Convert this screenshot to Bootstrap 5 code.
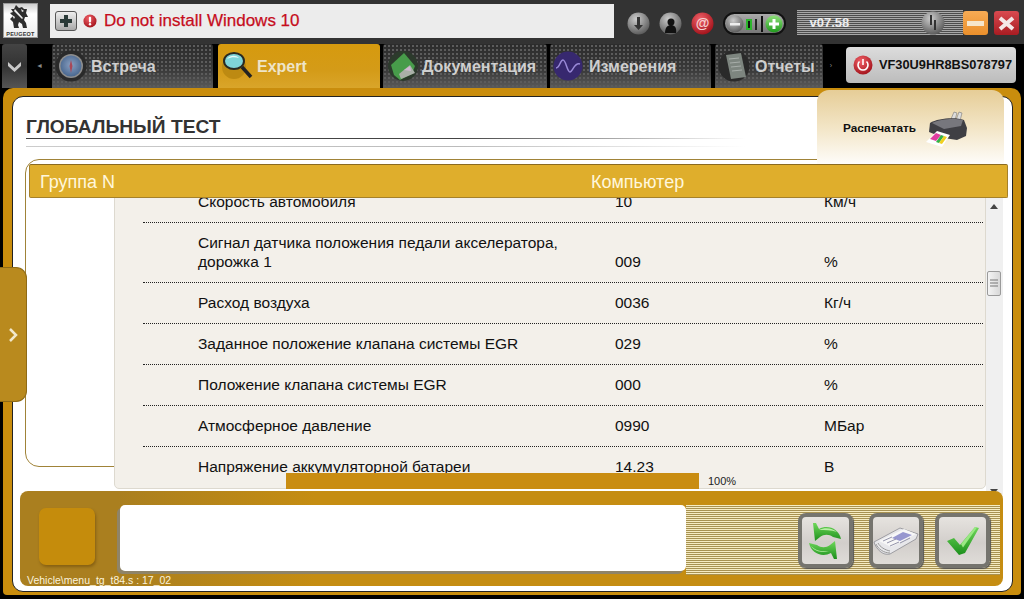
<!DOCTYPE html>
<html lang="ru">
<head>
    <meta charset="UTF-8">
    <meta name="viewport" content="width=device-width, initial-scale=1.0">
    <title>Глобальный тест</title>
    <link href="https://cdn.jsdelivr.net/npm/bootstrap@5.3.1/dist/css/bootstrap.min.css" rel="stylesheet">
    <style>
        html, body { height: 599px; overflow: hidden; }
        body { background: #000; font-family: "Liberation Sans", Arial, sans-serif; color: #111; }
        .app { width: 1024px; height: 599px; }

        /* top bar */
        .topbar { height: 44px; background: #333; padding: 4px 5px 0 3px; }
        .logo-box { width: 35px; height: 35px; margin-top: -1px; background: linear-gradient(#cfcfcf, #fff 30%, #eee); border: 1px solid #999; }
        .logo-name { font-size: 5.5px; line-height: 6px; font-weight: 700; letter-spacing: .2px; color: #333; }
        .msg-bar { width: 565px; height: 34px; margin-left: 12px; background: #ececec; padding-left: 5px; }
        .msg-plus { width: 22px; height: 20px; background: linear-gradient(#eee, #a9a9a9); border: 1px solid #555; border-radius: 3px; }
        .msg-text { color: #c60d1c; font-size: 17px; margin-left: 7px; -webkit-text-stroke: .25px #c60d1c; }
        .tools { margin: 8px 0 0 13px; gap: 9px; }
        .pill { width: 64px; height: 23px; margin: 8px 0 0 9px; border-radius: 12px; border: 2px solid #111; background: linear-gradient(#aaa, #777); padding: 0 1px; }
        .version { width: 166px; height: 25px; margin: 6px 0 0 11px; padding: 0 12px; color: #eee; font-size: 13px; font-weight: 700;
            background: repeating-linear-gradient(#a8a8a8 0 1px, #4c4c4c 1px 2px); }
        .win-btn { width: 25px; height: 24px; margin-top: 7px; border-radius: 3px; }
        .win-min { background: linear-gradient(#f6ab55, #ea8f2b); }
        .win-close { background: linear-gradient(#d94a50, #a81c22); margin-left: 6px; }

        /* tabs */
        .tabrow { height: 44px; background: #000; padding-left: 2px; }
        .drop-btn { width: 25px; background: linear-gradient(#444, #333 50%, #555); border-radius: 3px 3px 0 0; }
        .small-arrow { color: #888; font-size: 7px; width: 25px; text-align: center; }
        .tab-item { height: 44px; border-radius: 3px 3px 0 0; font-size: 16px; font-weight: 700; color: #cfcfcf; padding-left: 3px;
            background-image: radial-gradient(#5c5c5c 1px, transparent 1.2px), linear-gradient(#2c2c2c, #3a3a3a 60%, #5a5a5a);
            background-size: 4px 4px, 100% 100%; }
        .tab-item span { padding-top: 2px; }
        .tab-on { color: #eee4c8; background: linear-gradient(#d69a0e, #d49b18 60%, #d9a52a); }
        .vin-btn { width: 170px; height: 36px; margin: 3px 0 0 7px; border-radius: 4px; background: linear-gradient(#dcdcdc, #bcbcbc); color: #111; font-size: 12.8px; font-weight: 700; padding-left: 7px; gap: 6px; }

        /* main panel */
        .gold-frame { height: 507px; margin: 0 3px 0 3px; padding: 8px 8px 3px 9px; background: #c98d0d; border-radius: 10px 10px 4px 4px; }
        .inner-panel { height: 496px; background: #fff; border: 1px solid #222; border-radius: 11px; }
        .title-text { margin: 19px 0 0 13px; font-size: 19.2px; line-height: 22px; font-weight: 700; color: #333; }
        .title-line { height: 1px; margin-left: 13px; width: 720px; background: linear-gradient(90deg, #444, #444 60%, #fff); }
        .title-line2 { height: 1px; margin-left: 13px; margin-top: 7px; width: 720px; background: linear-gradient(90deg, #ccc, #bbb 60%, #fff); }
        .group-box { height: 308px; width: 975px; margin: 12px 0 0 12px; border: 1px solid #a08338; border-radius: 14px; }
        .group-band { left: 16px; top: 67px; width: 979px; height: 34px; padding-top: 2px; background: #dfae2c; border: 1px solid #a5812a; border-top-color: #8a6a20; border-radius: 2px; color: #fff7dc; font-size: 18px; z-index: 3; }
        .band-a { margin-left: 10px; width: 551px; }
        .data-list { left: 101px; top: 100px; width: 872px; height: 292px; background: #f3f0ea; border: 1px solid #ddd9cf; border-radius: 0 0 5px 5px; overflow: hidden; z-index: 2; font-size: 15.5px; }
        .data-rows { margin: -16px 2px 0 28px; }
        .data-row { padding: 10px 0 11px; line-height: 19px; border-bottom: 1px dotted #222; align-items: flex-end; }
        .data-row:last-child { border-bottom: 0; }
        .cell-a { width: 472px; padding-left: 55px; padding-right: 40px; flex: none; }
        .cell-b { width: 209px; flex: none; }
        .scroll-col { left: 973px; top: 100px; width: 17px; height: 298px; background: #f0f0f0; z-index: 2; }
        .scroll-thumb { left: 1px; top: 74px; width: 14px; height: 25px; background: linear-gradient(90deg, #f4f4f4, #d8d8d8); border: 1px solid #9a9a9a; border-radius: 2px; }
        .scroll-up, .scroll-down { left: 4px; width: 0; height: 0; border-left: 4px solid transparent; border-right: 4px solid transparent; }
        .scroll-up { top: 7px; border-bottom: 5px solid #444; }
        .scroll-down { bottom: 1px; border-top: 5px solid #444; }
        .print-tab { left: 804px; top: -7px; width: 187px; height: 78px; border-radius: 12px 12px 0 0; background: linear-gradient(#e6cd97, #f3e6c8 50%, #fff); font-size: 11.8px; font-weight: 700; color: #111; padding: 0 36px 0 26px; gap: 8px; z-index: 1; }
        .progress-wrap { left: 273px; top: 376px; z-index: 4; font-size: 11px; color: #222; }
        .progress-fill { width: 413px; height: 16px; background: #c98d12; margin-right: 9px; }

        /* bottom panel */
        .bottom-panel { height: 95px; margin: 0 8px 5px 7px; width: 983px; background: linear-gradient(90deg, #aa7f1f, #aa7f1f 10%, #c58d12 30%); border-radius: 8px; z-index: 5; padding: 14px 3px 0 19px; }
        .status-box { width: 56px; height: 57px; margin-top: 3px; background: #c58c0c; border-radius: 7px; box-shadow: 1px 2px 3px rgba(80, 50, 0, .4); }
        .msg-box { width: 566px; height: 66px; margin-left: 25px; background: #fff; border-radius: 5px; box-shadow: -3px 3px 0 #8f8468; }
        .stripe-zone { width: 314px; height: 70px; background: repeating-linear-gradient(#f6ecc2 0 1px, #a89252 1px 2px); padding: 8px 10px 0 112px; }
        .act-btn { width: 55px; height: 55px; background: linear-gradient(#e6e3df, #d2cecb 55%, #dfdcd8); border: 4px solid #75746e; border-radius: 8px; box-shadow: 1px 1px 1px #555; }
        .path-text { left: 7px; bottom: 0; font-size: 10.5px; line-height: 12px; color: #fbf3dc; }

        /* side handle */
        .side-handle { left: 0; top: 267px; width: 27px; height: 135px; background: #b98a1e; border: 1px solid #8f6a15; border-left: 0; border-radius: 0 11px 11px 0; z-index: 6; }
    </style>
</head>
<body>
<svg width="0" height="0" class="position-absolute">
    <defs>
        <radialGradient id="grey" cx="40%" cy="30%" r="75%"><stop offset="0" stop-color="#ccc"/><stop offset="1" stop-color="#555"/></radialGradient>
        <radialGradient id="redb" cx="40%" cy="30%" r="75%"><stop offset="0" stop-color="#f06068"/><stop offset="1" stop-color="#a01018"/></radialGradient>
        <linearGradient id="greenb" x1="0" y1="0" x2="0" y2="1"><stop offset="0" stop-color="#8fe07a"/><stop offset="1" stop-color="#1f9a1c"/></linearGradient>
        <linearGradient id="arrowg" x1="0" y1="0" x2="0" y2="1"><stop offset="0" stop-color="#6fd85a"/><stop offset="1" stop-color="#1c8f1c"/></linearGradient>
        <radialGradient id="globe" cx="50%" cy="45%" r="55%"><stop offset="0" stop-color="#8a9fc0"/><stop offset="1" stop-color="#4a6890"/></radialGradient>
    </defs>
</svg>
<div class="app position-relative">
    <!-- top bar -->
    <div class="topbar d-flex align-items-start">
        <div class="logo-box d-flex flex-column align-items-center justify-content-between">
            <svg width="26" height="25" viewBox="0 0 26 25"><path d="M9 1l3 3 3-1 2 2 3 0-1 4 2 4-3 0-1 3 2 3 1 5h-4l-1-4-3-2-1 3 1 3H7l-1-6-3-3 3-3-3-3 3-1-2-3 3 0z" fill="#2e2e2e"/><path d="M8 5l8 9-1 1-8-8zM14 5l3 2-2 1zM5 11l3 2-1 2z" fill="#eee"/></svg>
            <div class="logo-name">PEUGEOT</div>
        </div>
        <div class="msg-bar d-flex align-items-center">
            <div class="msg-plus d-flex align-items-center justify-content-center">
                <svg width="14" height="14" viewBox="0 0 14 14"><path d="M5 1h4v4h4v4H9v4H5V9H1V5h4z" fill="#2a3a38"/></svg>
            </div>
            <svg style="margin-left:6px" width="14" height="14" viewBox="0 0 15 15"><circle cx="7.5" cy="7.5" r="7" fill="url(#redb)"/><rect x="6.300" y="3" width="2.400" height="6" rx="1" fill="#fff"/><circle cx="7.500" cy="11" r="1.300" fill="#fff"/></svg>
            <span class="msg-text">Do not install Windows 10</span>
        </div>
        <div class="tools d-flex align-items-center">
            <svg width="23" height="23" viewBox="0 0 23 23"><circle cx="11.500" cy="11.500" r="11" fill="url(#grey)"/><path d="M10 5h3v8h3l-4.500 5L7 13h3z" fill="#333"/></svg>
            <svg width="23" height="23" viewBox="0 0 23 23"><circle cx="11.500" cy="11.500" r="11" fill="url(#grey)"/><circle cx="12" cy="10" r="3.500" fill="#111"/><path d="M6 21c0-6 3-8 6-8s6 2 5 8z" fill="#111"/></svg>
            <svg width="23" height="23" viewBox="0 0 23 23"><circle cx="11.500" cy="11.500" r="11" fill="url(#redb)"/><text x="11.500" y="16" text-anchor="middle" font-size="14" font-weight="700" font-family="Liberation Sans" fill="#f6d0d0">@</text></svg>
        </div>
        <div class="pill d-flex align-items-center justify-content-between">
            <svg width="18" height="18" viewBox="0 0 18 18"><circle cx="9" cy="9" r="8.500" fill="url(#grey)"/><rect x="4" y="8" width="10" height="2.500" fill="#eee"/></svg>
            <svg width="20" height="18" viewBox="0 0 20 18"><rect x="1" y="4" width="6" height="11" fill="#2cb52c"/><rect x="3" y="6" width="2" height="7" fill="#111"/><rect x="10" y="4" width="2" height="11" fill="#222"/><rect x="16" y="1" width="2" height="16" fill="#111"/></svg>
            <svg width="18" height="18" viewBox="0 0 18 18"><circle cx="9" cy="9" r="8.500" fill="url(#greenb)"/><path d="M7.500 4h3v3.500H14v3h-3.500V14h-3v-3.500H4v-3h3.500z" fill="#fff"/></svg>
        </div>
        <div class="version d-flex align-items-center justify-content-between">
            <span>v07.58</span>
            <svg style="margin-right:6px" width="24" height="24" viewBox="0 0 24 24"><circle cx="12" cy="12" r="11.500" fill="url(#grey)"/><rect x="9" y="4" width="2" height="10" fill="#333"/><rect x="13" y="9" width="2" height="10" fill="#333"/></svg>
        </div>
        <div class="win-btn win-min d-flex align-items-center justify-content-center">
            <svg width="17" height="5"><rect width="17" height="5" fill="#f6e6cc"/></svg>
        </div>
        <div class="win-btn win-close d-flex align-items-center justify-content-center">
            <svg width="17" height="15" viewBox="0 0 17 15"><path d="M2 2l13 11M15 2L2 13" stroke="#f4e8e8" stroke-width="4"/></svg>
        </div>
    </div>

    <!-- tabs -->
    <div class="tabrow d-flex">
        <div class="drop-btn d-flex align-items-center justify-content-center">
            <svg width="15" height="11" viewBox="0 0 15 11"><path d="M1 1l6.500 6L14 1v4l-6.500 6L1 5z" fill="#c8c8c8"/></svg>
        </div>
        <div class="small-arrow d-flex align-items-center justify-content-center">&#9668;</div>
        <div class="tab-item d-flex align-items-center" style="width:161px">
            <svg width="32" height="32" viewBox="0 0 32 32"><circle cx="16" cy="16" r="15.500" fill="#2a2a2a"/><circle cx="16" cy="16" r="12" fill="#8d8d8d"/><circle cx="16" cy="16" r="10.500" fill="url(#globe)"/><path d="M16 10l1.500 6-1.500 7-1.500-7z" fill="#a84858"/></svg>
            <span style="margin-left:4px">Встреча</span>
        </div>
        <div class="tab-item tab-on d-flex align-items-center" style="width:162px;margin-left:5px">
            <svg width="32" height="34" viewBox="0 0 32 34"><circle cx="13" cy="18" r="12" fill="#bd8a12"/><ellipse cx="13" cy="12" rx="10" ry="8" fill="#7fd4d8" stroke="#2a2a22" stroke-width="2"/><path d="M6 10c3-4 9-4 12-1-4-1-8-1-12 1z" fill="#e8f8f8"/><path d="M21 18l9 10" stroke="#222" stroke-width="3.500"/></svg>
            <span style="margin-left:4px">Expert</span>
        </div>
        <div class="tab-item d-flex align-items-center" style="width:164px;margin-left:3px">
            <svg width="34" height="32" viewBox="0 0 34 32"><circle cx="17" cy="16" r="15" fill="#2c3a2c"/><path d="M5 15L18 3l11 13-3 8-12 6-6-5z" fill="#479c4a"/><path d="M13 24l11-9 5 8-14 6z" fill="#a9b0a8"/><path d="M18 20l6-4 1 5z" fill="#d0b8d0"/></svg>
            <span style="margin-left:2px">Документация</span>
        </div>
        <div class="tab-item d-flex align-items-center" style="width:161px;margin-left:3px">
            <svg width="30" height="32" viewBox="0 0 30 32"><circle cx="15" cy="16" r="14.500" fill="#37286f"/><path d="M3 18c4 0 4-8 7-8s4 12 7 12 4-10 10-8" fill="none" stroke="#9a8ad8" stroke-width="1.500"/></svg>
            <span style="margin-left:6px">Измерения</span>
        </div>
        <div class="tab-item d-flex align-items-center" style="width:108px;margin-left:4px">
            <svg width="32" height="32" viewBox="0 0 32 32"><circle cx="16" cy="16" r="15.500" fill="#2a2a2a"/><path d="M8 5l15-2 5 24-15 2z" fill="#7d857f"/><path d="M11 9l10-1M12 13l10-1M13 17l10-1M14 21l10-1" stroke="#a8aeaa"/></svg>
            <span style="margin-left:5px">Отчеты</span>
        </div>
        <div class="small-arrow d-flex align-items-center justify-content-center" style="width:16px">&#8250;</div>
        <div class="vin-btn d-flex align-items-center">
            <svg width="20" height="20" viewBox="0 0 20 20"><circle cx="10" cy="10" r="9.500" fill="url(#redb)"/><path d="M6.500 6.500a5 5 0 1 0 7 0" fill="none" stroke="#fff" stroke-width="1.600"/><path d="M10 4v6" stroke="#fff" stroke-width="1.600"/></svg>
            <span>VF30U9HR8BS078797</span>
        </div>
    </div>

    <!-- main panel -->
    <div class="gold-frame">
        <div class="inner-panel position-relative d-flex flex-column">
            <div class="title-text">ГЛОБАЛЬНЫЙ ТЕСТ</div>
            <div class="title-line"></div>
            <div class="title-line2"></div>
            <div class="group-box"></div>

            <div class="group-band position-absolute d-flex align-items-center">
                <span class="band-a">Группа N</span>
                <span>Компьютер</span>
            </div>

            <div class="data-list position-absolute">
                <div class="data-rows" id="dataRows"></div>
            </div>
            <div class="scroll-col position-absolute">
                <div class="scroll-up position-absolute"></div>
                <div class="scroll-thumb position-absolute d-flex flex-column align-items-center justify-content-center">
                    <svg width="8" height="9"><path d="M0 1h8M0 4h8M0 7h8" stroke="#777"/></svg>
                </div>
                <div class="scroll-down position-absolute"></div>
            </div>

            <div class="print-tab position-absolute d-flex align-items-center">
                <span>Распечатать</span>
                <svg width="44" height="38" viewBox="0 0 44 38"><path d="M27 9l3-7 3 1-2 7zM32 10l3-8 3 1-2 8z" fill="#ddd" stroke="#777" stroke-width=".6"/><path d="M6 13c8-5 26-6 34-3l3 8-1 8-9 4-13-2-15-6z" fill="#3f3f44"/><path d="M8 13c8-4 22-5 31-3l-2 6-17 3z" fill="#77777d"/><path d="M13 21l13 4-8 12-16-5z" fill="#fff"/><path d="M12 23l5 2-5 6-6-2z" fill="#e03ca0"/><path d="M17 25l3 1-5 7-3-1z" fill="#34b04a"/><path d="M20 26l3 1-5 7-3-1z" fill="#f0d020"/></svg>
            </div>

            <div class="progress-wrap position-absolute d-flex align-items-center">
                <div class="progress-fill"></div>
                <span>100%</span>
            </div>

            <div class="bottom-panel position-relative d-flex align-items-start mt-auto">
                <div class="status-box"></div>
                <div class="msg-box"></div>
                <div class="stripe-zone d-flex">
                    <div class="act-btn d-flex align-items-center justify-content-center">
                        <svg width="38" height="40" viewBox="0 0 38 40"><path d="M7 2l2 18 5-4c4-3 9-3 13 0l8 2C33 8 22 3 13 8l-3-6z" fill="url(#arrowg)"/><path d="M31 38l-2-18-5 4c-4 3-9 3-13 0l-8-2c2 10 13 15 22 10l3 6z" fill="url(#arrowg)"/><path d="M13 9c6-3 13-2 18 2-6-2-12-2-18-2zM5 25c5 5 12 6 18 5-6 2-14 1-18-5z" fill="#b9efa6"/></svg>
                    </div>
                    <div class="act-btn d-flex align-items-center justify-content-center" style="margin-left:16px">
                        <svg width="46" height="30" viewBox="0 0 46 30"><path d="M1 16L27 2l18 6-2 5-26 15c-7 2-14-5-16-12z" fill="#e7e7ea" stroke="#8c8c92" stroke-width=".8"/><path d="M6 15L31 3l12 5-25 13z" fill="#f7f7f7"/><path d="M19 12l11-6 9 3-12 6z" fill="#9797cf"/><path d="M10 15l9-4M14 17l9-4M17 20l9-4M27 17l10-5" stroke="#8888a0" stroke-width=".9"/><path d="M3 18c2 5 8 9 14 9M5 17c2 4 7 7 12 8" fill="none" stroke="#999"/></svg>
                    </div>
                    <div class="act-btn d-flex align-items-center justify-content-center" style="margin-left:12px">
                        <svg width="34" height="30" viewBox="0 0 34 30"><path d="M1 15l7-3 6 7L29 1l4 1-14 25-6 2z" fill="url(#arrowg)"/><path d="M15 18L29 1l2 .5-14 20z" fill="#9ae884"/></svg>
                    </div>
                </div>
                <div class="path-text position-absolute">Vehicle\menu_tg_t84.s : 17_02</div>
            </div>
        </div>
    </div>

    <div class="side-handle position-absolute d-flex align-items-center justify-content-center">
        <svg width="10" height="14" viewBox="0 0 10 14"><path d="M2 1l6 6-6 6" fill="none" stroke="#f2e8cc" stroke-width="2.500"/></svg>
    </div>
</div>

<script src="https://cdn.jsdelivr.net/npm/bootstrap@5.3.1/dist/js/bootstrap.bundle.min.js"></script>
<script>
    const rows = [
        ['Скорость автомобиля', '10', 'Км/ч'],
        ['Сигнал датчика положения педали акселератора, дорожка 1', '009', '%'],
        ['Расход воздуха', '0036', 'Кг/ч'],
        ['Заданное положение клапана системы EGR', '029', '%'],
        ['Положение клапана системы EGR', '000', '%'],
        ['Атмосферное давление', '0990', 'МБар'],
        ['Напряжение аккумуляторной батареи', '14.23', 'В']
    ];
    const box = document.getElementById('dataRows');
    rows.forEach(r => {
        box.innerHTML += `
          <div class="data-row d-flex">
            <div class="cell-a">${r[0]}</div>
            <div class="cell-b">${r[1]}</div>
            <div>${r[2]}</div>
          </div>`;
    });
</script>
</body>
</html>
